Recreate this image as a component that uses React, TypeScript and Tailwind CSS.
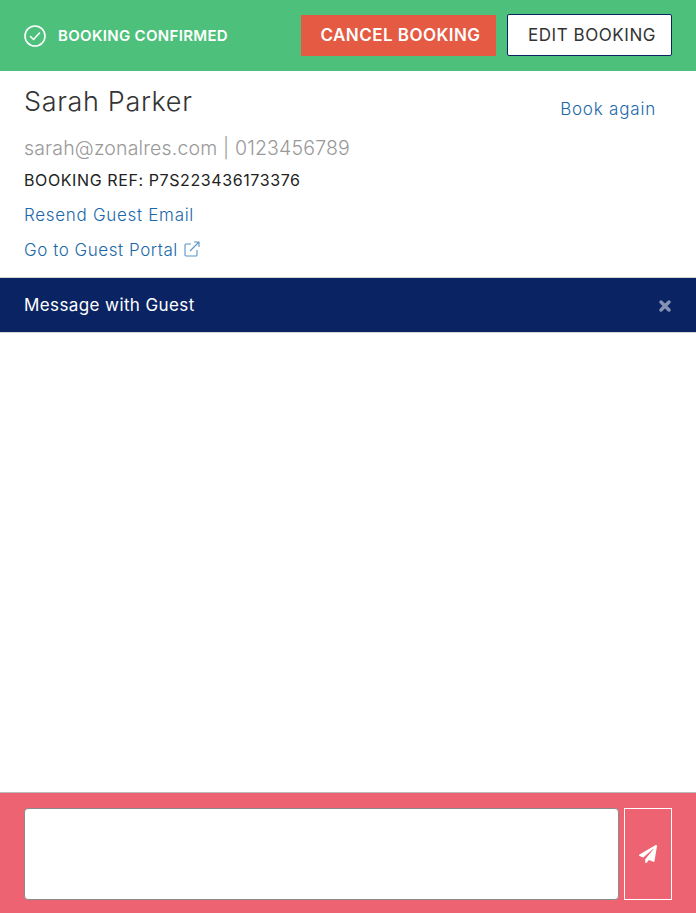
import React from "react";
import { FaPaperPlane } from "react-icons/fa";

export default function App() {
  return (
    <div className="flex h-[913px] w-[696px] flex-col overflow-hidden bg-white font-['Inter','Liberation_Sans',sans-serif]">
      <header className="flex h-[71px] shrink-0 items-center bg-[#4dc07c] pl-6 pr-6">
        <svg width="22" height="22" viewBox="0 0 22 22" fill="none" stroke="white" strokeWidth="1.6" strokeLinecap="round" strokeLinejoin="round" className="shrink-0">
          <circle cx="11" cy="11" r="10" />
          <path d="M6.5 11.5l3 3 6-6.5" />
        </svg>
        <span className="ml-[12px] pt-[1px] text-[15px] font-semibold tracking-[0.32px] text-white">BOOKING CONFIRMED</span>
        <button className="ml-auto flex h-[41px] w-[195px] items-center justify-center bg-[#e55a42] pl-[4px] text-[17px] font-semibold tracking-[0.45px] text-white">CANCEL BOOKING</button>
        <button className="-mt-px ml-[11px] flex h-[42px] w-[165px] items-center justify-center rounded-[2px] border border-[#0a2463] bg-white pt-[2px] pl-[5px] text-[17px] font-normal tracking-[0.55px] text-[#333333]">EDIT BOOKING</button>
      </header>

      <section className="flex h-[206px] shrink-0 flex-col px-6">
        <div className="flex items-start justify-between">
          <h1 className="mt-[13px] text-[27px] leading-[36px] font-light tracking-[0.65px] text-[#333333]">Sarah Parker</h1>
          <a className="mt-[27px] mr-4 text-[17px] leading-[22px] font-light tracking-[0.8px] text-[#1a68a8]">Book again</a>
        </div>
        <p className="mt-[14px] text-[19.5px] leading-[28px] font-light tracking-[0.16px] text-[#999999]">sarah@zonalres.com | 0123456789</p>
        <p className="mt-[8px] text-[16px] leading-[20px] font-normal tracking-[0.6px] text-[#222222]">BOOKING REF: P7S223436173376</p>
        <a className="mt-[14px] text-[17px] leading-[22px] font-light tracking-[0.7px] text-[#1a68a8]">Resend Guest Email</a>
        <a className="mt-[13px] flex items-center text-[17px] leading-[22px] font-light tracking-[0.55px] text-[#1a68a8]">
          Go to Guest Portal
          <svg width="16" height="16" viewBox="0 0 16 16" fill="none" stroke="#5b93c4" strokeWidth="1.1" className="mb-[3px] ml-[6px]">
            <path d="M13 9v5a1 1 0 0 1-1 1H2a1 1 0 0 1-1-1V4a1 1 0 0 1 1-1h5" />
            <path d="M6 10L15 1M10 1h5v5" />
          </svg>
        </a>
      </section>

      <div className="flex h-[56px] shrink-0 items-center justify-between border-y border-[#d4d4d4] bg-[#0a2463] pt-[2px] pr-[25px] pl-6">
        <span className="text-[17px] font-normal tracking-[0.4px] text-white">Message with Guest</span>
        <svg width="12" height="12" viewBox="0 0 12 12" stroke="#8592b3" strokeWidth="3.4" strokeLinecap="round">
          <path d="M2 2l8 8M10 2l-8 8" />
        </svg>
      </div>

      <main className="flex-1 bg-white" />

      <footer className="flex h-[121px] shrink-0 gap-[5px] border-t border-[#bbbbbb] bg-[#ee6372] px-6 pt-[15px] pb-[13px]">
        <textarea className="h-full flex-1 resize-none rounded-[4px] border border-[#8a8a8a] bg-white" />
        <button className="flex h-full w-[48px] shrink-0 items-center justify-center border border-white">
          <FaPaperPlane size={18} color="white" />
        </button>
      </footer>
    </div>
  );
}
